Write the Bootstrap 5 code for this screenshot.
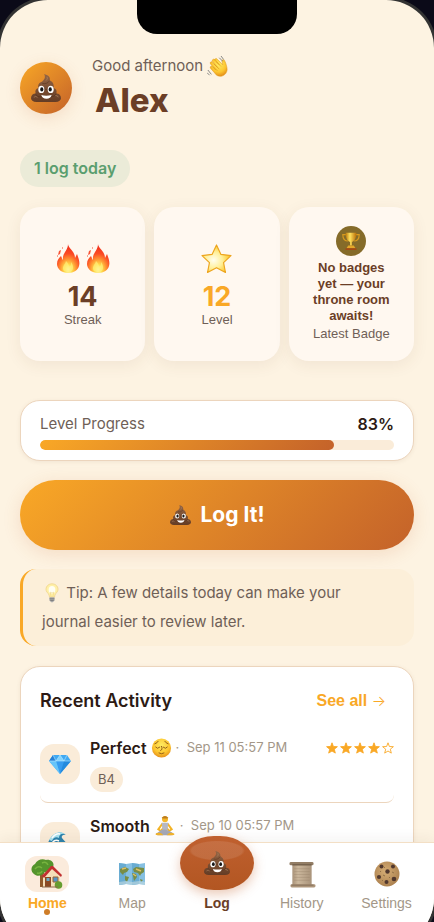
<!DOCTYPE html>
<html lang="en">
<head>
<meta charset="utf-8">
<meta name="viewport" content="width=device-width, initial-scale=1">
<title>Home</title>
<link href="https://cdn.jsdelivr.net/npm/bootstrap@5.3.0/dist/css/bootstrap.min.css" rel="stylesheet">
<style>
:root{--brown:#6b3e26;--ink:#2c1a14;--muted:#6f5f57;--soft:#a39788;--amber:#f9a826;--rust:#c4622a;--sand:#faecd9;--line:#ecd5bd}
body{background:#0b0a18;font-family:Inter,"Liberation Sans",sans-serif;color:var(--ink);height:100vh;overflow:hidden}
.phone{height:calc(100vh + 24px);background:#fdf3e2;border-radius:48px;box-shadow:0 0 0 3px #333;overflow:hidden}
.notch{width:160px;height:34px;background:#000;border-radius:0 0 20px 20px}
.screen{min-height:0;overflow:hidden;padding:0 20px}
.screen>*{flex-shrink:0}
.arial{font-family:"Liberation Sans",Arial,sans-serif}
.hello{padding-top:20px;gap:20px}
.avatar{width:52px;height:52px;background:linear-gradient(135deg,var(--amber),var(--rust));box-shadow:0 4px 16px rgba(196,98,42,.15)}
.greet{font-size:15px;line-height:24px;color:var(--muted)}
.who{font-size:33px;line-height:44px;font-weight:800;color:var(--brown);padding-left:3px;margin:0}
.today{margin-top:28px;padding:6px 14px;font-size:16px;line-height:25px;font-weight:600;color:#5a9e6f;background:#ebebd8}
.stats{display:grid;grid-template-columns:repeat(3,1fr);gap:9px;margin-top:20px}
.stat{height:154px;border-radius:20px;background:#fff8f0;box-shadow:0 4px 16px rgba(107,62,38,.08);font-size:13px;line-height:16px;color:var(--muted)}
.counter{padding-top:4px}
.flames{gap:6px}
.figure-no{font-family:Inter,sans-serif;font-size:27px;line-height:31px;font-weight:700;color:var(--brown)}
.figure-no.gold{color:var(--amber)}
.nobadge{font-weight:700;color:var(--brown);width:88px;margin-top:4px;margin-bottom:2px}
.panel{background:#fff;border:1px solid var(--line);border-radius:20px;box-shadow:0 1px 4px rgba(107,62,38,.08)}
.level{margin-top:39px;padding:11px 19px 10px;font-size:15px;line-height:24px;color:var(--muted)}
.level b{color:var(--ink);font-weight:600;font-size:16px}
.level .progress{height:10px;margin-top:4px;background:var(--sand);border-radius:5px}
.level .progress-bar{background:linear-gradient(135deg,var(--amber),var(--rust));border-radius:5px}
.logit,.logit:hover{margin-top:19px;height:70px;border:0;border-radius:35px;color:#fff;font-size:21px;font-weight:700;gap:10px;background:linear-gradient(135deg,var(--amber),var(--rust));box-shadow:0 4px 18px rgba(196,98,42,.16)}
.tip{margin-top:19px;padding:9px 40px 10px 19px;border-left:3px solid var(--amber);border-radius:16px;background:#fcefd9;font-size:15px;line-height:29px;color:var(--muted)}
.recent{margin-top:20px;padding:18px 19px 0}
.recent h2{font-size:18px;line-height:32px;font-weight:600;margin:0}
.seeall{color:var(--amber);font-size:16px;font-weight:700;text-decoration:none;padding-right:8px}
.seeall span{font-family:Inter,sans-serif;font-size:15px;font-weight:300}
.entry{padding:10px 0;min-height:78px;border-bottom:1px solid var(--line);border-radius:8px;gap:10px}
.tile{width:40px;height:40px;border-radius:14px;background:var(--sand)}
.kind{font-size:16px;line-height:26px;font-weight:600}
.when{font-size:13px;color:var(--soft)}
.rating{gap:2px;color:var(--amber)}
.tag{font-size:13px;line-height:25px;color:var(--muted);background:var(--sand);padding:0 8px;margin-top:6px}
.tabs{height:104px;background:#fff;border-top:1px solid #f3dfc5;box-shadow:0 -4px 12px rgba(60,30,20,.05);padding:13px 5px 0;z-index:2}
.tab{flex:1 1 0;color:var(--soft);font-size:14px;line-height:16px;text-decoration:none}
.glyph{width:44px;height:36px;border-radius:12px;margin-bottom:3px}
.active-tab{color:var(--amber);font-weight:700}
.active-tab .glyph{background:#fbebdc}
.dot{width:6px;height:6px;background:#cf7d28;margin-top:-2px}
.log-tab{color:var(--brown);font-weight:700}
.orb{width:74px;height:54px;margin-top:-20px;margin-bottom:5px;border-radius:34px/27px;background:radial-gradient(ellipse 28px 10px at 50% 27%,rgba(255,255,255,.1) 0 90%,transparent 100%),linear-gradient(#c0602f,#b25622);box-shadow:0 4px 12px rgba(196,98,42,.35)}
svg{display:block;flex:none}
.inline-pic{display:inline-block;vertical-align:-5px}
</style>
<script src="https://cdn.jsdelivr.net/npm/bootstrap@5.3.0/dist/js/bootstrap.bundle.min.js"></script>
</head>
<body>
<svg width="0" height="0" class="position-absolute" aria-hidden="true">
<defs>
<linearGradient id="gp" x2="0" y2="1"><stop stop-color="#946544"/><stop offset="1" stop-color="#643c25"/></linearGradient>
<radialGradient id="gf" cx=".5" cy=".88" r=".85"><stop stop-color="#fffbd0"/><stop offset=".2" stop-color="#ffe04c"/><stop offset=".42" stop-color="#ff9432"/><stop offset=".65" stop-color="#fb4b24"/><stop offset="1" stop-color="#f02c1c"/></radialGradient>
<radialGradient id="gs" cx=".4" cy=".55" r=".6"><stop stop-color="#fffef0"/><stop offset=".5" stop-color="#fff09a"/><stop offset="1" stop-color="#fcc21e"/></radialGradient>
<radialGradient id="gy" cx=".5" cy=".35" r=".65"><stop stop-color="#ffec62"/><stop offset=".65" stop-color="#fcc52f"/><stop offset="1" stop-color="#e58f1b"/></radialGradient>
<linearGradient id="gt"><stop stop-color="#b97508"/><stop offset=".4" stop-color="#ffe25e"/><stop offset="1" stop-color="#b86d06"/></linearGradient>
<radialGradient id="gc" cx=".45" cy=".4" r=".6"><stop stop-color="#d5ad75"/><stop offset="1" stop-color="#ad8250"/></radialGradient>
<linearGradient id="gr"><stop stop-color="#a99278"/><stop offset=".3" stop-color="#cbb79c"/><stop offset="1" stop-color="#a9937a"/></linearGradient>
<symbol id="poo" viewBox="0 0 32 30" preserveAspectRatio="none">
<path fill="url(#gp)" d="M14 0c4 1 7 3 6 7 3 1 5 4 4 8 3 1 4 3 3 6 3 0 5 2 5 5 0 2-2 4-6 4H6c-4 0-6-2-6-4 0-3 2-5 5-5-1-3 0-5 3-6-1-4 1-6 4-7 2-2 4-4 2-8z"/>
<path d="M12 10c3 1 6 0 8-3M8 15c5 2 12 2 16 0M5 21c0 3 4 4 8 3m14-3c-1 3-5 4-8 3" fill="none" stroke="#4c2a18" stroke-opacity=".5"/>
<path d="M17 3c1 2 0 3-1 4M3 25q2-2 4 0M26 23q3 0 3 2" fill="none" stroke="#c39a78" stroke-opacity=".5"/>
<g fill="#fff"><ellipse cx="11" cy="16.500" rx="3.200" ry="3.900"/><ellipse cx="21" cy="16.500" rx="3.200" ry="3.900"/><path d="M11 22.500q5 1.500 11 0-1 4-5.500 4T11 22.500z"/></g>
<ellipse cx="11.500" cy="16.500" rx="1.700" ry="2.300" fill="#161616"/><ellipse cx="20.500" cy="16.500" rx="1.700" ry="2.300" fill="#161616"/>
</symbol>
<symbol id="fire" viewBox="0 0 24 29"><path fill="url(#gf)" d="M12 0c0 4 7 7 7 14l2-4c2 5 3 9 2 12-1 4-5 7-11 7S1 25 1 20c0-4 2-6 4-8 1 2 1 3 2 4C6 9 12 7 12 0z"/><path d="M3 7l2-1-1 4-2 1zM1 12l1-1v2zM6 4l1-1v2z" fill="#f75335"/><path d="M8 27c-3-4 1-6 2-10 2 2 3 4 3 6 2-1 2-3 2-5 3 4 3 8-1 10z" fill="#fff07a" opacity=".7"/></symbol>
<symbol id="star" viewBox="0 0 32 30"><path d="M16 1l4.600 9.800L31 12l-7.700 7.300 2 10.200L16 24.500l-9.300 5 2-10.200L1 12l10.400-1.200z" fill="url(#gs)" stroke="#eda51e" stroke-width="1.200" stroke-linejoin="round"/></symbol>
<symbol id="rate" viewBox="0 0 12 12"><path d="M6 .8l1.400 3.700 4 .2-3.100 2.500 1 3.900L6 9l-3.300 2.100 1-3.900L.6 4.700l4-.2z" stroke="currentColor" stroke-width=".9"/></symbol>
<symbol id="wave" viewBox="0 0 24 24"><path d="M9 4c1-2 2-1 3 0l5 5 1 1-1-4c0-2 2-2 3-1 2 4 3 8 3 11-1 6-7 9-12 6L4 14c-1-2 1-3 2-2l4 4-6-7c-1-2 1-3 2-2l6 6-6-7c0-2 1-3 3-2l5 6-5-5z" fill="url(#gy)" stroke="#e39b19" stroke-width=".6"/><path d="M8 9l6 6M7 12l5 5M11 7l5 5" stroke="#db931c" fill="none" stroke-width=".7"/><path d="M14 2l4 4M16 0l3 4M1 16l4 5M0 19l3 3" stroke="#777" fill="none" stroke-width="1"/></symbol>
<symbol id="cup" viewBox="0 0 22 22"><path d="M6 4H2c0 5 3 7 6 7m8-7h4c0 5-3 7-6 7" fill="none" stroke="#d79a1e" stroke-width="1.300"/><path d="M5 2h12c0 6-2 9-5 10v4h-2v-4C7 11 5 8 5 2z" fill="url(#gt)"/><path d="M8 16h6l2 3H6z" fill="#e3a629"/><path d="M5 19h12v2H5z" fill="#a44a13"/></symbol>
<symbol id="bulb" viewBox="0 0 18 24"><path d="M9 1c5 0 8 4 7 8-1 3-4 4-4 8H6c0-4-3-5-4-8C1 5 4 1 9 1z" fill="#fff0a8" stroke="#efd58d"/><ellipse cx="9" cy="8" rx="4" ry="4.500" fill="#fffef2"/><path d="M8 17l-1-6 2 1 2-1-1 6" fill="none" stroke="#edcd70" stroke-width=".6"/><path d="M6 17h6v4l-2 2H8l-2-2z" fill="#aaa"/><path d="M6 19h6M7 21h4" stroke="#777"/></symbol>
<symbol id="gem" viewBox="0 0 24 20"><path d="M5 1h14l4 6-11 13L1 7z" fill="#40a9f2"/><path d="M8 7l4-6 4 6z" fill="#81d4ff"/><path d="M8 7h8l-4 13z" fill="#369cf0"/><path d="M1 7h7l4 13z" fill="#67c5fa"/><path d="M5 1L1 7h7z" fill="#2581d7"/><path d="M16 7h7L12 20z" fill="#238ade"/><path d="M5 1l3 6 4-6 4 6 3-6M1 7h22" fill="none" stroke="#bdeaff" stroke-width=".6"/></symbol>
<symbol id="calm" viewBox="0 0 24 24"><circle cx="12" cy="12" r="11.500" fill="url(#gy)"/><path d="M4 7q3-1 4-3m8 0q1 2 4 3M5 11q2 3 5 0m4 0q3 3 5 0M9 18q3 2 6 0M12 10q2 4-1 5" fill="none" stroke="#8b5515" stroke-width="1.100" stroke-linecap="round"/></symbol>
<symbol id="yoga" viewBox="0 0 24 24"><circle cx="12" cy="4" r="3.600" fill="#f4b72a"/><path d="M8 2q4-4 8 0l-1 1H9z" fill="#bd7d1c"/><path d="M9 9L4 16l3 2 4-5m4-4l5 7-3 2-4-5" fill="none" stroke="#f3b326" stroke-width="2.400"/><path d="M8 8h8l-1 9H9z" fill="#b5b8c4"/><path d="M7 17c5-2 9 0 14 3 2 2 0 3-2 3H5c-4 0-5-2-2-3z" fill="#a5a8b6"/><path d="M1 21q4-2 7 0l2 2H3q-3 0-2-2zm22 0q-4-2-7 0l-2 2h7q3 0 2-2z" fill="#f2b42c"/></symbol>
<symbol id="surf" viewBox="0 0 24 24"><path d="M0 13C3 4 12-1 18 5c-3-1-5 1-4 3 3 4 8 7 10 16H1z" fill="#2e83ad"/><path d="M1 10C5 3 12 0 17 4c-4-1-6 1-6 4-3-2-6 0-7 3z" fill="#a8e2f0"/><path d="M4 8q4-5 8-4M4 13q3-4 7-2" fill="none" stroke="#fff" stroke-width="1.500"/></symbol>
<symbol id="house" viewBox="0 0 32 30"><path d="M9 10h4v18H9z" fill="#925a2b"/><path d="M3 15C-1 12 0 7 4 5c2-4 7-6 11-4 5-1 9 3 7 7-1 5-5 5-8 5-3 4-8 5-11 2z" fill="#54942c"/><path d="M4 10q3-4 7-1m0-5q4-2 6 2M6 14q4 1 5-2" fill="none" stroke="#76b43f" stroke-width="1.500"/><path d="M12 16l8-8 9 8v12H12z" fill="#f4dfb9"/><path d="M11 17l9-10h2l9 9-1 2-9-8-8 9z" fill="#c13030"/><path d="M14 18h6v10h-6z" fill="#8c4a24"/><path d="M15.500 19h3v3h-3z" fill="#68a9c6"/><path d="M22 18h5v5h-5z" fill="#5395c7" stroke="#9a6435"/><circle cx="27.500" cy="26" r="3.800" fill="#669d30"/><path d="M11 28h16" stroke="#8c6b4d"/></symbol>
<symbol id="map" viewBox="0 0 28 24"><path d="M1 1l7 1 6-1 7 1 6-1v22l-6-1-7 1-6-1-7 1z" fill="#86c0e2"/><path d="M8 2v20l-7 1V1zm13 0v20l-7 1V1z" fill="#69acd2"/><path d="M2 7l5-2 4 2-2 3-3 1-1 2-3-3zm5 7l4 1-2 5-2-2zM15 7l3-2 8 1v4l-3 2-1 2-2-3-4-1zM14 11l4 1 1 3-3 4-1-5zM22 17l3 1-2 2z" fill="#788d45"/><path d="M4 7l4-1M15 12l3 2M18 7l5 2" stroke="#dfbf62" stroke-width="1.500"/><path d="M1 20l7-1 6 1 7-1 6 1v3l-6-1-7 1-6-1-7 1z" fill="#c5dbe0" opacity=".6"/></symbol>
<symbol id="scroll" viewBox="0 0 28 28"><path d="M4 3h20v22H4z" fill="url(#gr)"/><path d="M6 8h16M6 11h16M6 14h16M6 17h16M6 20h16" stroke="#907a62" stroke-width=".7" opacity=".45"/><rect x="1" y="1" width="25" height="3.500" rx="1.500" fill="#927d65"/><path d="M4 4h20" stroke="#675542"/><rect x="2" y="24" width="26" height="3.500" rx="1.500" fill="#ad957a"/><path d="M3 25h23" stroke="#78634e" stroke-width=".8"/></symbol>
<symbol id="cookie" viewBox="0 0 26 26"><circle cx="13" cy="13" r="12.500" fill="url(#gc)"/><g fill="#51382e"><circle cx="7.500" cy="5.500" r="2"/><circle cx="19" cy="5.500" r="2"/><circle cx="13.500" cy="10.500" r="2.200"/><circle cx="5" cy="16" r="2.100"/><circle cx="20" cy="18" r="2.300"/><circle cx="12.500" cy="21" r="2"/></g><path d="M10 6l1 1M18 11l2 1M9 14l2 1M15 16l1 1M6 10l1 1M8 19l1 1" stroke="#927046"/></symbol>
</defs>
</svg>
<div class="phone d-flex flex-column">
<div class="notch mx-auto flex-shrink-0"></div>
<main class="screen d-flex flex-column flex-grow-1">
<header class="hello d-flex align-items-center">
<div class="avatar rounded-circle d-flex align-items-center justify-content-center"><svg width="30" height="28"><use href="#poo"/></svg></div>
<div><div class="greet d-flex align-items-center gap-1">Good afternoon <svg width="21" height="21"><use href="#wave"/></svg></div><h1 class="who">Alex</h1></div>
</header>
<div class="today rounded-pill align-self-start">1 log today</div>
<section class="stats text-center arial">
<div class="stat counter d-flex flex-column align-items-center justify-content-center"><div class="flames d-flex"><svg width="24" height="29"><use href="#fire"/></svg><svg width="24" height="29"><use href="#fire"/></svg></div><div class="figure-no mt-2">14</div><div>Streak</div></div>
<div class="stat counter d-flex flex-column align-items-center justify-content-center"><svg width="31" height="29"><use href="#star"/></svg><div class="figure-no gold mt-2">12</div><div>Level</div></div>
<div class="stat d-flex flex-column align-items-center justify-content-center"><svg width="30" height="30"><circle cx="15" cy="15" r="15" fill="#856b29"/><use href="#cup" x="5" y="5" width="20" height="20"/></svg><div class="nobadge">No badges yet — your throne room awaits!</div><div>Latest Badge</div></div>
</section>
<section class="panel level">
<div class="d-flex justify-content-between"><span>Level Progress</span><b>83%</b></div>
<div class="progress" role="progressbar" aria-label="Level Progress" aria-valuenow="83" aria-valuemin="0" aria-valuemax="100"><div class="progress-bar" style="width:83%"></div></div>
</section>
<button type="button" class="btn logit d-flex align-items-center justify-content-center"><svg width="21" height="20"><use href="#poo"/></svg>Log It!</button>
<div class="tip"><svg class="inline-pic" width="20" height="20"><use href="#bulb"/></svg> Tip: A few details today can make your journal easier to review later.</div>
<section class="panel recent">
<div class="d-flex justify-content-between align-items-center mb-2"><h2>Recent Activity</h2><a href="#" class="seeall arial">See all <span>→</span></a></div>
<div class="entry d-flex align-items-center">
<div class="tile d-flex align-items-center justify-content-center"><svg width="24" height="20"><use href="#gem"/></svg></div>
<div class="flex-grow-1"><div class="d-flex align-items-center"><span class="kind me-1">Perfect</span><svg width="21" height="20"><use href="#calm"/></svg><span class="when ms-1">·&nbsp; Sep 11 05:57 PM</span><span class="rating ms-auto d-flex" role="img" aria-label="4 of 5 stars"><svg width="12" height="12" fill="currentColor"><use href="#rate"/></svg><svg width="12" height="12" fill="currentColor"><use href="#rate"/></svg><svg width="12" height="12" fill="currentColor"><use href="#rate"/></svg><svg width="12" height="12" fill="currentColor"><use href="#rate"/></svg><svg width="12" height="12" fill="none"><use href="#rate"/></svg></span></div><span class="tag rounded-pill d-inline-block">B4</span></div>
</div>
<div class="entry d-flex align-items-center">
<div class="tile d-flex align-items-center justify-content-center"><svg width="24" height="24"><use href="#surf"/></svg></div>
<div class="flex-grow-1 align-self-start"><div class="d-flex align-items-center"><span class="kind me-1">Smooth</span><svg width="22" height="20"><use href="#yoga"/></svg><span class="when ms-1">·&nbsp; Sep 10 05:57 PM</span></div></div>
</div>
</section>
</main>
<nav class="tabs d-flex flex-shrink-0 arial position-relative">
<a href="#" class="tab active-tab d-flex flex-column align-items-center"><span class="glyph d-flex align-items-center justify-content-center"><svg width="32" height="30"><use href="#house"/></svg></span>Home<span class="dot rounded-circle"></span></a>
<a href="#" class="tab d-flex flex-column align-items-center"><span class="glyph d-flex align-items-center justify-content-center"><svg width="28" height="24"><use href="#map"/></svg></span>Map</a>
<a href="#" class="tab log-tab d-flex flex-column align-items-center"><span class="orb d-flex align-items-center justify-content-center"><svg width="26" height="24"><use href="#poo"/></svg></span>Log</a>
<a href="#" class="tab d-flex flex-column align-items-center"><span class="glyph d-flex align-items-center justify-content-center"><svg width="28" height="27"><use href="#scroll"/></svg></span>History</a>
<a href="#" class="tab d-flex flex-column align-items-center"><span class="glyph d-flex align-items-center justify-content-center"><svg width="26" height="26"><use href="#cookie"/></svg></span>Settings</a>
</nav>
</div>
</body>
</html>
